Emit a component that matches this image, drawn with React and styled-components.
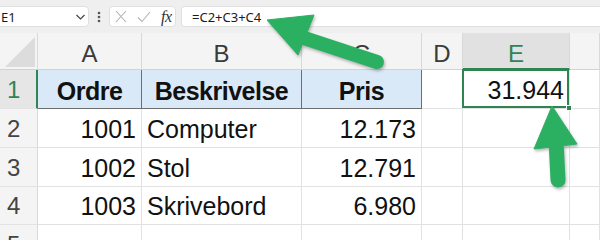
import React from 'react';
import styled, { createGlobalStyle, css } from 'styled-components';

const GlobalStyle = createGlobalStyle`
  html, body { margin: 0; padding: 0; background: #ffffff; }
  body {
    width: 600px;
    height: 240px;
    overflow: hidden;
    font-family: "Liberation Sans", Arial, sans-serif;
    color: #111;
  }
`;

const GREEN = '#2f8552';
const GRID = '#e1e1e1';
const BOX_LINE = '#6f6f6f';

const Page = styled.div`
  position: relative;
  width: 600px;
  height: 240px;
  overflow: hidden;
`;

/* ---------- formula bar ---------- */
const FormulaBar = styled.div`
  display: flex;
  align-items: flex-start;
  height: 33px;
  box-sizing: border-box;
  padding-top: 6px;
  background: #efefef;
  font-family: "Noto Sans", "Liberation Sans", sans-serif;
  font-size: 13px;
  color: #1a1a1a;
`;

const BarBox = styled.div`
  display: flex;
  align-items: center;
  box-sizing: border-box;
  height: 21px;
  background: #ffffff;
  border: 1px solid #e0e0e0;
  border-radius: 4px;
`;

const NameBox = styled(BarBox)`
  width: 99px;
  margin-left: -10px;
  padding: 0 2px 0 10px;
  justify-content: space-between;
`;

const Dots = styled.div`
  display: flex;
  align-items: center;
  justify-content: center;
  width: 20px;
  height: 21px;
`;

const FxBox = styled(BarBox)`
  width: 67px;
  padding-left: 5px;
  gap: 10px;
`;

const Fx = styled.span`
  font-family: "Liberation Serif", "Times New Roman", serif;
  font-style: italic;
  font-size: 16px;
  color: #333;
  letter-spacing: -0.5px;
`;

const FormulaInput = styled(BarBox)`
  flex: 1;
  margin-left: 5px;
  margin-right: -6px;
  padding-left: 10px;
  border-right: none;
`;

/* ---------- sheet grid ---------- */
const Sheet = styled.div`
  display: grid;
  grid-template-columns: 38px 104px 160px 120px 41px 107px 1fr;
  grid-template-rows: 37px 39px 39px 39px 38px 39px;
  font-size: 25px;
`;

const headerBase = css`
  box-sizing: border-box;
  display: flex;
  align-items: flex-end;
  background: #f4f4f4;
  color: #3a3a3a;
  font-size: 24px;
  border-right: 1px solid #d9d9d9;
  border-bottom: 1px solid #d2d2d2;
`;

const CornerCell = styled.div`
  ${headerBase};
  justify-content: flex-end;
  padding: 0 2px 2px 0;
`;

const CornerTriangle = styled.div`
  width: 30px;
  height: 30px;
  background: #dcdcdc;
  clip-path: polygon(100% 0, 100% 100%, 0 100%);
`;

const ColHeader = styled.div`
  ${headerBase};
  justify-content: center;
  padding-bottom: 1px;
  ${(p) =>
    p.$active &&
    css`
      background: #e1e1e1;
      color: ${GREEN};
      border-bottom: 2px solid ${GREEN};
      padding-bottom: 0;
    `}
`;

const RowHeader = styled.div`
  ${headerBase};
  padding: 0 0 4px 7px;
  border-bottom-color: #e3e3e3;
  color: #444;
  ${(p) =>
    p.$active &&
    css`
      background: #e6e6e6;
      color: ${GREEN};
      border-right: 2px solid ${GREEN};
    `}
`;

const Cell = styled.div`
  position: relative;
  box-sizing: border-box;
  display: flex;
  align-items: flex-end;
  justify-content: ${(p) =>
    p.$align === 'right' ? 'flex-end' : p.$align === 'center' ? 'center' : 'flex-start'};
  padding: 0 5px 3px 5px;
  white-space: nowrap;
  background: #ffffff;
  border-right: 1px solid ${GRID};
  border-bottom: 1px solid ${GRID};
  ${(p) =>
    p.$titled &&
    css`
      background: #dae9f8;
      font-weight: 700;
      letter-spacing: -0.5px;
      border-right-color: ${BOX_LINE};
      border-bottom-color: ${BOX_LINE};
      padding-bottom: 2px;
    `}
  ${(p) =>
    p.$selected &&
    css`
      &::after {
        content: '';
        position: absolute;
        top: -1px;
        left: -1px;
        right: 0;
        bottom: 0;
        border: 2px solid ${GREEN};
        pointer-events: none;
      }
      &::before {
        content: '';
        position: absolute;
        right: -3px;
        bottom: -3px;
        width: 4px;
        height: 4px;
        background: ${GREEN};
        border: 1px solid #ffffff;
        z-index: 1;
      }
    `}
`;

const ArrowLayer = styled.svg`
  position: absolute;
  left: 0;
  top: 0;
  pointer-events: none;
  filter: drop-shadow(1px 2px 1.5px rgba(0, 0, 0, 0.28));
`;

const columns = ['A', 'B', 'C', 'D', 'E', 'F'];

const rows = [
  { n: 1, cells: [
    { v: 'Ordre', align: 'center', titled: true },
    { v: 'Beskrivelse', align: 'center', titled: true },
    { v: 'Pris', align: 'center', titled: true },
    { v: '' },
    { v: '31.944', align: 'right', selected: true },
    { v: '' },
  ] },
  { n: 2, cells: [
    { v: '1001', align: 'right' }, { v: 'Computer' }, { v: '12.173', align: 'right' },
    { v: '' }, { v: '' }, { v: '' },
  ] },
  { n: 3, cells: [
    { v: '1002', align: 'right' }, { v: 'Stol' }, { v: '12.791', align: 'right' },
    { v: '' }, { v: '' }, { v: '' },
  ] },
  { n: 4, cells: [
    { v: '1003', align: 'right' }, { v: 'Skrivebord' }, { v: '6.980', align: 'right' },
    { v: '' }, { v: '' }, { v: '' },
  ] },
  { n: 5, cells: [{ v: '' }, { v: '' }, { v: '' }, { v: '' }, { v: '' }, { v: '' }] },
];

function Chevron() {
  return (
    <svg width="11" height="8" viewBox="0 0 11 8">
      <path d="M1.5 2 L5.5 6 L9.5 2" fill="none" stroke="#444" strokeWidth="1.2" />
    </svg>
  );
}

function VerticalDots() {
  return (
    <svg width="4" height="12" viewBox="0 0 4 12">
      <circle cx="2" cy="2" r="1.3" fill="#555" />
      <circle cx="2" cy="6" r="1.3" fill="#555" />
      <circle cx="2" cy="10" r="1.3" fill="#555" />
    </svg>
  );
}

function CancelIcon() {
  return (
    <svg width="12" height="13" viewBox="0 0 12 13">
      <path d="M1 1 L11 12 M11 1 L1 12" stroke="#b3b3b3" strokeWidth="1.1" fill="none" />
    </svg>
  );
}

function CheckIcon() {
  return (
    <svg width="14" height="12" viewBox="0 0 14 12">
      <path d="M1 6.5 L5 10.5 L13 1" stroke="#b3b3b3" strokeWidth="1.1" fill="none" />
    </svg>
  );
}

export default function App() {
  return (
    <Page>
      <GlobalStyle />
      <FormulaBar>
        <NameBox>
          <span>E1</span>
          <Chevron />
        </NameBox>
        <Dots>
          <VerticalDots />
        </Dots>
        <FxBox>
          <CancelIcon />
          <CheckIcon />
          <Fx>fx</Fx>
        </FxBox>
        <FormulaInput>=C2+C3+C4</FormulaInput>
      </FormulaBar>

      <Sheet>
        <CornerCell>
          <CornerTriangle />
        </CornerCell>
        {columns.map((c) => (
          <ColHeader key={c} $active={c === 'E'}>
            {c === 'F' ? '' : c}
          </ColHeader>
        ))}
        {rows.map((r) => (
          <React.Fragment key={r.n}>
            <RowHeader $active={r.n === 1}>{r.n}</RowHeader>
            {r.cells.map((cell, i) => (
              <Cell
                key={i}
                $align={cell.align}
                $titled={cell.titled}
                $selected={cell.selected}
              >
                {cell.v}
              </Cell>
            ))}
          </React.Fragment>
        ))}
      </Sheet>

      <ArrowLayer width="600" height="240" viewBox="0 0 600 240">
        <g fill="#2bb062" stroke="#2bb062">
          <polygon points="267,20 314,15 298,55" strokeWidth="1" strokeLinejoin="round" />
          <line x1="298" y1="36" x2="377" y2="62" strokeWidth="14" strokeLinecap="round" />
          <polygon points="552,106 534,149 577,144" strokeWidth="1" strokeLinejoin="round" />
          <line x1="556" y1="140" x2="558" y2="180" strokeWidth="15" strokeLinecap="round" />
        </g>
      </ArrowLayer>
    </Page>
  );
}
